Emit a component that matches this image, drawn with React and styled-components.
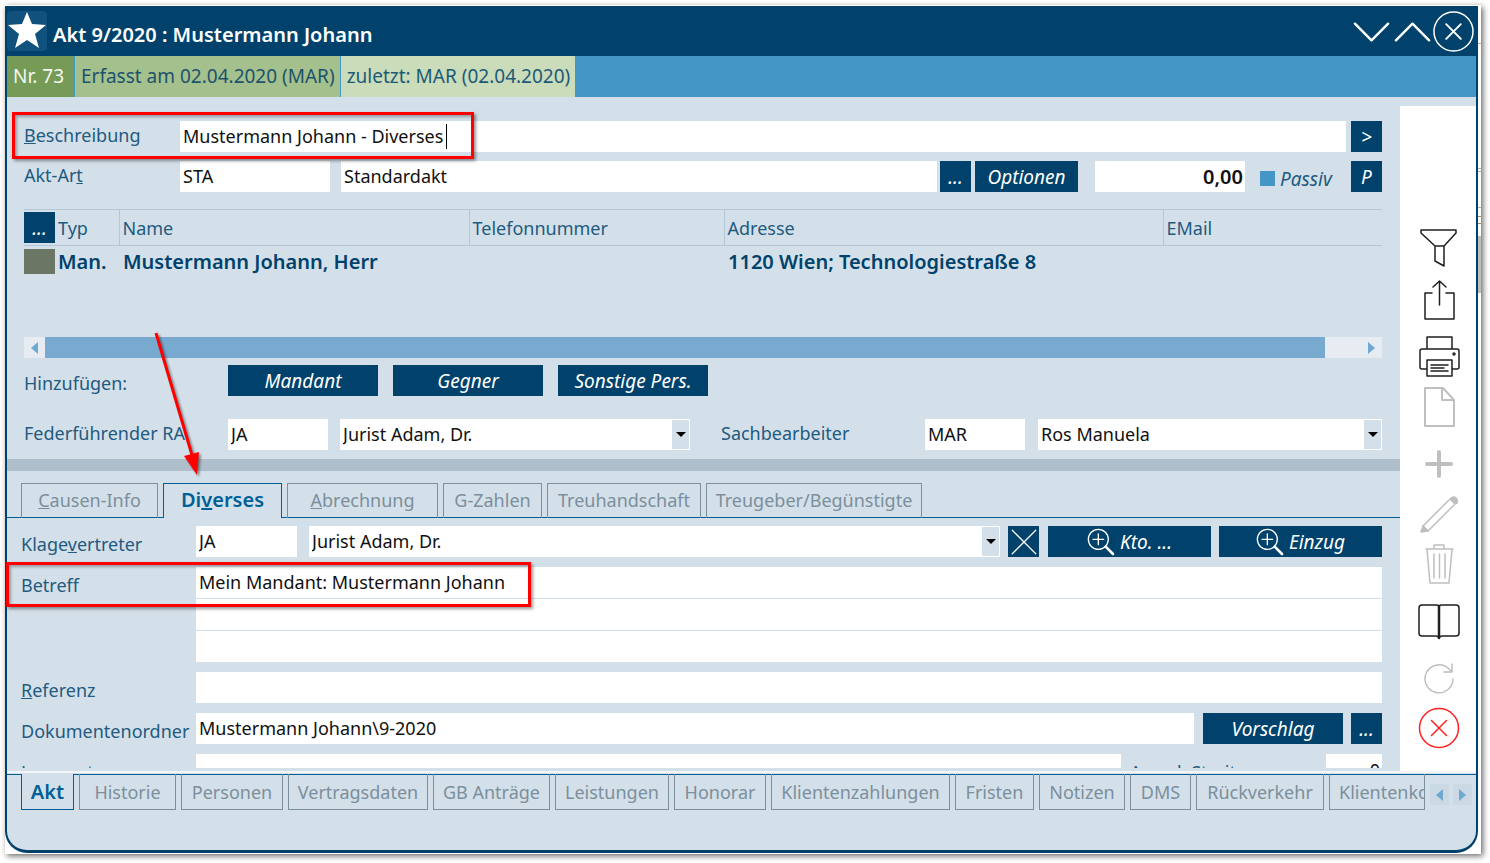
import styled, { createGlobalStyle, css } from "styled-components";

const navy = "#00426b";
const panel = "#d4e0e9";
const labelBlue = "#225a80";
const tabBlue = "#005f98";
const tabGrey = "#7b8f9c";

const GlobalStyle = createGlobalStyle`
  * {
    box-sizing: border-box;
  }

  body {
    margin: 0;
    background: #fff;
    font-family: "Noto Sans", "Open Sans", sans-serif;
    font-size: 18px;
    color: ${labelBlue};
  }

  button, input, select, textarea {
    font: inherit;
    margin: 0;
    border: 0;
    border-radius: 0;
    outline: none;
  }

  button {
    padding: 0;
    background: none;
    cursor: pointer;
  }
`;

const Sheet = styled.div`
  position: relative;
  display: flex;
  height: calc(100vh - 14px);
  min-height: 600px;
  margin: 5px 9px 9px 5px;
  padding: 1px 0;
  background: #fff;
  box-shadow: 2px 2px 6px rgba(0, 0, 0, 0.6);
`;

const Window = styled.main`
  flex: 1;
  min-width: 0;
  display: flex;
  flex-direction: column;
  overflow: hidden;
  background: ${panel};
  border: solid ${navy};
  border-width: 0 2px 3px;
  border-radius: 0 0 22px 22px;
`;

/* edge of the window behind */
const Sliver = styled.div`
  width: 3px;
  background: linear-gradient(
    #fff 37px, #b4b4b4 37px 38px, #fff 38px 162px, #b4b4b4 162px 163px,
    #fff 163px 165px, #b4b4b4 165px 166px, #fff 166px 201px, #b4b4b4 201px 202px,
    #fff 202px 210px, #a98a70 210px 211px, #fff 211px 217px, #a98a70 217px 218px,
    #fff 218px 230px, #bdbdbd 230px 287px, #fff 287px
  );
`;

const TitleBar = styled.header`
  flex: none;
  display: flex;
  align-items: flex-start;
  height: 50px;
  padding: 5px 2px 0 0;
  background: ${navy};
  color: #fff;
`;

const StarButton = styled.button`
  width: 40px;
  height: 40px;
  border-radius: 4px;
  background: #10527d;
`;

const Title = styled.h1`
  flex: 1;
  margin: 0;
  padding: 10px 6px 0;
  font-size: 20px;
  font-weight: 600;
  line-height: 28px;
  white-space: nowrap;
`;

const WindowButton = styled.button`
  width: 41px;
  height: 41px;
  color: #fff;
`;

const StatusBar = styled.div`
  flex: none;
  display: flex;
  gap: 1px;
  height: 41px;
  background: #4496c6;
`;

const Status = styled.span`
  min-width: ${(p) => p.$width}px;
  padding: 0 5px 0 6px;
  background: ${(p) => p.$bg};
  color: ${(p) => p.$fg};
  font-size: 19px;
  line-height: 41px;
  white-space: nowrap;
`;

const Body = styled.div`
  flex: 1;
  min-height: 0;
  display: flex;
  overflow: hidden;
`;

const Content = styled.div`
  flex: 1;
  min-width: 0;
  display: flex;
  flex-direction: column;
`;

const FilePanel = styled.section`
  flex: none;
  padding: 24px 18px 9px 17px;
`;

const Row = styled.div`
  display: flex;
  min-height: 31px;
  margin-top: ${(p) => p.$top || 0}px;
`;

const HalfRow = styled.div`
  display: grid;
  grid-template-columns: 666fr 661fr;
  gap: 31px;
  margin-top: 23px;
`;

const Label = styled.label`
  flex: none;
  width: ${(p) => p.$width}px;
  line-height: 28px;
  white-space: nowrap;
`;

const LowerLabel = styled(Label)`
  line-height: 36px;
  height: 31px;
`;

const fieldText = css`
  height: 31px;
  padding: 0 3px 1px;
  background: #fff;
  color: #111;
`;

const Field = styled.input`
  ${fieldText}
  flex: ${(p) => (p.$width ? "none" : 1)};
  width: ${(p) => (p.$width ? `${p.$width}px` : "auto")};
  min-width: 0;
  margin-right: ${(p) => p.$gap || 0}px;
`;

const NumberField = styled(Field)`
  padding: 0 2px;
  text-align: right;
  font-weight: ${(p) => (p.$bold ? 600 : 400)};
  font-size: ${(p) => (p.$bold ? 20 : 18)}px;
`;

const FieldWithCaret = styled.div`
  position: relative;
  display: flex;
  flex: 1;
  margin-right: 5px;
`;

const Caret = styled.span`
  position: absolute;
  left: 266px;
  top: 3px;
  width: 1px;
  height: 25px;
  background: #000;
`;

const SelectBox = styled.div`
  position: relative;
  display: flex;
  flex: 1;
  min-width: 0;
  margin-right: ${(p) => p.$gap || 0}px;
`;

const Select = styled.select`
  ${fieldText}
  appearance: none;
  width: 100%;
`;

const SelectArrow = styled.span`
  position: absolute;
  top: 1px;
  right: 1px;
  display: flex;
  align-items: center;
  justify-content: center;
  width: 17px;
  height: 29px;
  background: ${panel};
  pointer-events: none;

  &::after {
    content: "";
    border: solid transparent;
    border-width: 5px 5px 0;
    border-top-color: #000;
  }
`;

const Lines = styled.textarea`
  flex: 1;
  height: 95px;
  padding: 0 3px;
  resize: none;
  overflow: hidden;
  line-height: 31px;
  color: #111;
  background: repeating-linear-gradient(#fff 0 31px, ${panel} 31px 32px);
`;

const Button = styled.button`
  flex: none;
  display: flex;
  align-items: center;
  justify-content: center;
  gap: 5px;
  width: ${(p) => p.$width || 31}px;
  height: 31px;
  margin-right: ${(p) => p.$gap || 0}px;
  background: ${navy};
  color: #fff;
  font-size: 19px;
  font-style: italic;
  white-space: nowrap;
`;

const CheckLabel = styled.label`
  flex: none;
  display: flex;
  align-items: center;
  gap: 5px;
  width: 91px;
  padding-top: 4px;
  font-size: 19px;
  font-style: italic;
`;

const Check = styled.input`
  appearance: none;
  width: 15px;
  height: 15px;
  background: #4496c6;
`;

const TableArea = styled.div`
  height: 128px;
  margin-top: 17px;
`;

const Table = styled.table`
  width: 100%;
  table-layout: fixed;
  border-collapse: collapse;
  text-align: left;
  white-space: nowrap;

  th {
    height: 36px;
    padding: 0 3px;
    border: solid #b3c7d6;
    border-width: 1px 0 1px 1px;
    font-weight: 400;
  }

  td {
    height: 32px;
    padding: 0 4px;
    color: ${navy};
    font-size: 20px;
    font-weight: 600;
    line-height: 28px;
  }

  th:first-child,
  td:first-child {
    padding: 0;
    border-left: 0;
  }
`;

const Col = styled.col`
  width: ${(p) => p.$width}px;
`;

const TypeCell = styled.div`
  display: flex;
  align-items: center;
  gap: 3px;
`;

const Swatch = styled.span`
  width: 31px;
  height: 25px;
  background: #6b7664;
`;

const ScrollBar = styled.div`
  display: flex;
  height: 21px;
  margin-bottom: 7px;
`;

const ScrollTrack = styled.div`
  flex: 1;
  padding-right: 36px;
  background: #e6ecf1;
`;

const ScrollThumb = styled.div`
  height: 21px;
  background: #78aad0;
`;

const ArrowButton = styled.button`
  display: flex;
  align-items: center;
  justify-content: center;
  width: 21px;
  height: 21px;
  background: #e6ecf1;

  &::after {
    content: "";
    border: solid transparent;
    border-width: ${(p) => (p.$next ? "6px 0 6px 7px" : "6px 7px 6px 0")};
    border-${(p) => (p.$next ? "left" : "right")}-color: #6fa8d0;
  }
`;

const Divider = styled.div`
  flex: none;
  height: 12px;
  background: #afbecb;
`;

const Tabs = styled.div`
  flex: none;
  display: flex;
  gap: 5px;
  margin-top: 12px;
  padding-left: 14px;
  box-shadow: inset 0 -1px ${tabBlue};
`;

const Tab = styled.button`
  flex: none;
  width: ${(p) => p.$width}px;
  height: 35px;
  padding-bottom: 3px;
  border: 1px solid ${tabGrey};
  border-bottom: 0;
  color: ${tabGrey};
  white-space: nowrap;

  ${(p) =>
    p.$active &&
    css`
      border-color: ${tabBlue};
      background: ${panel};
      color: ${tabBlue};
      font-size: 20px;
      font-weight: 600;
    `}
`;

const DetailPanel = styled.section`
  flex: 1;
  min-height: 0;
  margin-bottom: 3px;
  padding: 8px 18px 0 14px;
  overflow: hidden;
  display: flex;
  flex-direction: column;
  gap: 10px;
`;

const DetailRow = styled(Row)`
  flex: none;
`;

const SideBar = styled.aside`
  flex: none;
  display: flex;
  flex-direction: column;
  align-items: center;
  gap: 7px;
  width: 76px;
  margin-top: 9px;
  padding: 119px 2px 0 4px;
  background: #fff;
`;

const ToolGroup = styled.div`
  display: flex;
  flex-direction: column;
`;

const Tool = styled.button`
  display: flex;
  align-items: center;
  justify-content: center;
  width: 50px;
  height: 50px;
  color: ${(p) => (p.$danger ? "#ff2020" : p.disabled ? "#bfbfbf" : "#1f1f1f")};
`;

const Footer = styled.footer`
  flex: none;
  height: 79px;
  border-top: 2px solid #f2f6f9;
`;

const FooterTabs = styled.div`
  display: flex;
  gap: 5px;
  margin-top: 1px;
  padding: 0 4px 0 14px;
  box-shadow: inset 0 1px ${tabBlue};
`;

const FooterTab = styled(Tab)`
  height: 36px;
  padding: 0;
  border-top: 0;
  border-bottom: 1px solid ${(p) => (p.$active ? tabBlue : tabGrey)};
`;

const LastFooterTab = styled(FooterTab)`
  flex: 1;
  min-width: 0;
  padding-left: 9px;
  overflow: hidden;
  text-align: left;
`;

const FooterArrows = styled.div`
  display: flex;
  align-items: center;
  gap: 4px;
  padding-top: 5px;
`;

const FooterArrow = styled(ArrowButton)`
  width: 19px;
  background: #cbd9e4;
`;

const Mark = styled.div`
  position: absolute;
  left: ${(p) => p.$x}px;
  top: ${(p) => p.$y}px;
  width: ${(p) => p.$width}px;
  height: ${(p) => p.$height}px;
  border: 3px solid #f00;
  box-shadow: 2px 2px 3px rgba(0, 0, 0, 0.4), inset 2px 2px 3px rgba(0, 0, 0, 0.3);
  pointer-events: none;
`;

const Pointer = styled.svg`
  position: absolute;
  left: 145px;
  top: 323px;
  filter: drop-shadow(2px 2px 1px rgba(0, 0, 0, 0.4));
  pointer-events: none;
`;

const Icon = ({ children, size = 42, width = 1.5 }) => (
  <svg width={size} height={size} viewBox="0 0 42 42" fill="none" stroke="currentColor" strokeWidth={width} strokeLinecap="round" strokeLinejoin="round">
    {children}
  </svg>
);

const SearchPlus = () => (
  <Icon size={28} width={2}>
    <circle cx="17" cy="17" r="15" />
    <path d="M17 9v16M9 17h16" />
    <path d="M28 28l11 11" strokeWidth="4" />
  </Icon>
);

const tools = [
  [
    { name: "Filter", icon: <path d="M3 1h35v3L26 17v20l-9-5V17L3 4zM17 17h9" /> },
    { name: "Exportieren", icon: <path d="M14 14H7v26h29V14h-8M21.500 26V2M15 8l6.500-6L28 8" /> },
  ],
  [
    {
      name: "Drucken",
      icon: (
        <>
          <path d="M9 13V1h25v12M9 33H4q-2 0-2-2V15q0-2 2-2h35q2 0 2 2v16q0 2-2 2h-5M9 24h25v16H9zM13 29h17M13 32h13M13 35h17" />
          <circle cx="36" cy="18" r="1" />
        </>
      ),
    },
    { name: "Neues Dokument", off: true, icon: <path d="M7 2h18l11 12v26H7zM24 2v12h12" strokeWidth="2" /> },
  ],
  [
    { name: "Hinzufügen", off: true, icon: <path d="M21 9v24M9 21h24" strokeWidth="4" /> },
    {
      name: "Bearbeiten",
      off: true,
      icon: (
        <>
          <path d="M5 33L31 7M10 38L36 12M5 33l5 5" />
          <path d="M3 39l2-6 5 5zM33 5q3-2 5 0t1 5l-2 1-5-5z" fill="currentColor" />
        </>
      ),
    },
    { name: "Löschen", off: true, icon: <path d="M8 6h27M16 6V2h10v4M9 6l3 34h19l3-34M16 11v24M21.500 11v24M27 11v24" /> },
  ],
  [
    {
      name: "Nachschlagen",
      icon: (
        <>
          <path d="M21 6q-1-1-3-1H4q-3 0-3 3v25q0 3 3 3h14q2 0 3 2 1-2 3-2h14q3 0 3-3V8q0-3-3-3H24q-2 0-3 1" />
          <path d="M21 6v32" strokeWidth="2.500" />
        </>
      ),
    },
  ],
  [
    { name: "Aktualisieren", off: true, icon: <path d="M35 22a14 14 0 1 1-4-10l3 3M34 7v8h-8" /> },
    {
      name: "Abbrechen",
      danger: true,
      icon: (
        <>
          <circle cx="21" cy="21" r="19.500" />
          <path d="M13.500 13.500l15 15m0-15l-15 15" />
        </>
      ),
    },
  ],
];

const footerTabs = [
  ["Historie", 97],
  ["Personen", 102],
  ["Vertragsdaten", 140],
  ["GB Anträge", 117],
  ["Leistungen", 114],
  ["Honorar", 92],
  ["Klientenzahlungen", 179],
  ["Fristen", 79],
  ["Notizen", 86],
  ["DMS", 61],
  ["Rückverkehr", 128],
];

const App = () => (
  <>
    <GlobalStyle />
    <Sheet>
      <Window>
        <TitleBar>
          <StarButton aria-label="Favorit">
            <svg width="40" height="40" viewBox="0 0 40 40" fill="#fff">
              <path d="M20 1l5 12 14 1-11 9 4 14-12-8-12 8 4-14L1 14l14-1z" />
            </svg>
          </StarButton>
          <Title>Akt 9/2020 : Mustermann Johann</Title>
          <WindowButton aria-label="Nächster">
            <Icon size={41} width={2.5}><path d="M4 13l17 17 17-17" /></Icon>
          </WindowButton>
          <WindowButton aria-label="Vorheriger">
            <Icon size={41} width={2.5}><path d="M4 30l17-17 17 17" /></Icon>
          </WindowButton>
          <WindowButton aria-label="Schließen">
            <Icon size={41}>
              <circle cx="21" cy="21" r="20" />
              <path d="M13.500 13.500l15 15m0-15l-15 15" strokeWidth="2" />
            </Icon>
          </WindowButton>
        </TitleBar>

        <StatusBar>
          <Status $width={67} $bg="#759b56" $fg="#f4f8f0">Nr. 73</Status>
          <Status $width={262} $bg="#a3c08d" $fg="#1d536c">Erfasst am 02.04.2020 (MAR)</Status>
          <Status $width={233} $bg="#cadcb9" $fg="#1d5a78">zuletzt: MAR (02.04.2020)</Status>
        </StatusBar>

        <Body>
          <Content>
            <FilePanel>
              <Row>
                <Label $width={156} htmlFor="beschreibung"><u>B</u>eschreibung</Label>
                <FieldWithCaret>
                  <Field id="beschreibung" defaultValue="Mustermann Johann - Diverses" />
                  <Caret />
                </FieldWithCaret>
                <Button>&gt;</Button>
              </Row>
              <Row $top={9}>
                <Label $width={156} htmlFor="aktart">Akt-Ar<u>t</u></Label>
                <Field id="aktart" $width={150} $gap={11} defaultValue="STA" />
                <Field aria-label="Akt-Art Bezeichnung" $gap={3} defaultValue="Standardakt" />
                <Button $gap={4}>...</Button>
                <Button $width={103} $gap={17}>Optionen</Button>
                <NumberField aria-label="Betrag" $width={150} $gap={15} $bold defaultValue="0,00" />
                <CheckLabel><Check type="checkbox" />Passiv</CheckLabel>
                <Button>P</Button>
              </Row>

              <TableArea>
                <Table>
                  <colgroup>
                    <Col $width={95} />
                    <Col $width={350} />
                    <Col $width={255} />
                    <Col $width={439} />
                    <Col $width={219} />
                  </colgroup>
                  <thead>
                    <tr>
                      <th><TypeCell><Button>...</Button>Typ</TypeCell></th>
                      <th>Name</th>
                      <th>Telefonnummer</th>
                      <th>Adresse</th>
                      <th>EMail</th>
                    </tr>
                  </thead>
                  <tbody>
                    <tr>
                      <td><TypeCell><Swatch />Man.</TypeCell></td>
                      <td>Mustermann Johann, Herr</td>
                      <td />
                      <td>1120 Wien; Technologiestraße 8</td>
                      <td />
                    </tr>
                  </tbody>
                </Table>
              </TableArea>
              <ScrollBar>
                <ArrowButton aria-label="Nach links" />
                <ScrollTrack><ScrollThumb /></ScrollTrack>
                <ArrowButton $next aria-label="Nach rechts" />
              </ScrollBar>

              <Row>
                <LowerLabel as="span" $width={204}>Hinzufügen:</LowerLabel>
                <Button $width={150} $gap={15}>Mandant</Button>
                <Button $width={150} $gap={15}>Gegner</Button>
                <Button $width={150}>Sonstige Pers.</Button>
              </Row>
              <HalfRow>
                <Row>
                  <Label $width={204} htmlFor="ra">Federführender RA</Label>
                  <Field id="ra" $width={100} $gap={12} defaultValue="JA" />
                  <SelectBox>
                    <Select aria-label="Federführender RA Name"><option>Jurist Adam, Dr.</option></Select>
                    <SelectArrow />
                  </SelectBox>
                </Row>
                <Row>
                  <Label $width={204} htmlFor="sb">Sachbearbeiter</Label>
                  <Field id="sb" $width={100} $gap={13} defaultValue="MAR" />
                  <SelectBox>
                    <Select aria-label="Sachbearbeiter Name"><option>Ros Manuela</option></Select>
                    <SelectArrow />
                  </SelectBox>
                </Row>
              </HalfRow>
            </FilePanel>

            <Divider />
            <Tabs role="tablist">
              <Tab role="tab" $width={137}><u>C</u>ausen-Info</Tab>
              <Tab role="tab" $width={119} $active aria-selected>Di<u>v</u>erses</Tab>
              <Tab role="tab" $width={151}><u>A</u>brechnung</Tab>
              <Tab role="tab" $width={99}>G-Zahlen</Tab>
              <Tab role="tab" $width={154}>Treuhandschaft</Tab>
              <Tab role="tab" $width={216}>Treugeber/Begünstigte</Tab>
            </Tabs>

            <DetailPanel>
              <DetailRow>
                <LowerLabel $width={175} htmlFor="klage">Klage<u>v</u>ertreter</LowerLabel>
                <Field id="klage" $width={101} $gap={12} defaultValue="JA" />
                <SelectBox $gap={8}>
                  <Select aria-label="Klagevertreter Name"><option>Jurist Adam, Dr.</option></Select>
                  <SelectArrow />
                </SelectBox>
                <Button $gap={9} aria-label="Leeren">
                  <Icon size={26} width={2}><path d="M2 2l38 38M40 2L2 40" /></Icon>
                </Button>
                <Button $width={163} $gap={8}><SearchPlus />Kto. ...</Button>
                <Button $width={163}><SearchPlus />Einzug</Button>
              </DetailRow>
              <DetailRow>
                <LowerLabel $width={175} htmlFor="betreff">Betreff</LowerLabel>
                <Lines id="betreff" defaultValue="Mein Mandant: Mustermann Johann" />
              </DetailRow>
              <DetailRow>
                <LowerLabel $width={175} htmlFor="referenz"><u>R</u>eferenz</LowerLabel>
                <Field id="referenz" />
              </DetailRow>
              <DetailRow>
                <LowerLabel $width={175} htmlFor="ordner">Dokumentenordner</LowerLabel>
                <Field id="ordner" $gap={9} defaultValue="Mustermann Johann\9-2020" />
                <Button $width={140} $gap={8}>Vorschlag</Button>
                <Button>...</Button>
              </DetailRow>
              <DetailRow>
                <LowerLabel $width={175} htmlFor="lager">Lagerort</LowerLabel>
                <Field id="lager" $gap={9} />
                <LowerLabel $width={196} htmlFor="streit">Anz. d. Streitg.</LowerLabel>
                <NumberField id="streit" $width={56} defaultValue="0" />
              </DetailRow>
            </DetailPanel>
          </Content>

          <SideBar>
            {tools.map((group) => (
              <ToolGroup key={group[0].name}>
                {group.map((t) => (
                  <Tool key={t.name} aria-label={t.name} disabled={t.off} $danger={t.danger}>
                    <Icon>{t.icon}</Icon>
                  </Tool>
                ))}
              </ToolGroup>
            ))}
          </SideBar>
        </Body>

        <Footer>
          <FooterTabs role="tablist">
            <FooterTab role="tab" $width={53} $active aria-selected>Akt</FooterTab>
            {footerTabs.map(([name, width]) => (
              <FooterTab role="tab" key={name} $width={width}>{name}</FooterTab>
            ))}
            <LastFooterTab role="tab">Klientenkonto</LastFooterTab>
            <FooterArrows>
              <FooterArrow aria-label="Vorige Reiter" />
              <FooterArrow $next aria-label="Nächste Reiter" />
            </FooterArrows>
          </FooterTabs>
        </Footer>
      </Window>
      <Sliver />

      <Mark $x={7} $y={107} $width={462} $height={47} />
      <Mark $x={1} $y={557} $width={525} $height={45} />
      <Pointer width="60" height="155" viewBox="0 0 60 155">
        <path d="M6 5l36 122" stroke="#f00" strokeWidth="3" />
        <path d="M34 128l15-4-2 23z" fill="#f00" />
      </Pointer>
    </Sheet>
  </>
);

export default App;
